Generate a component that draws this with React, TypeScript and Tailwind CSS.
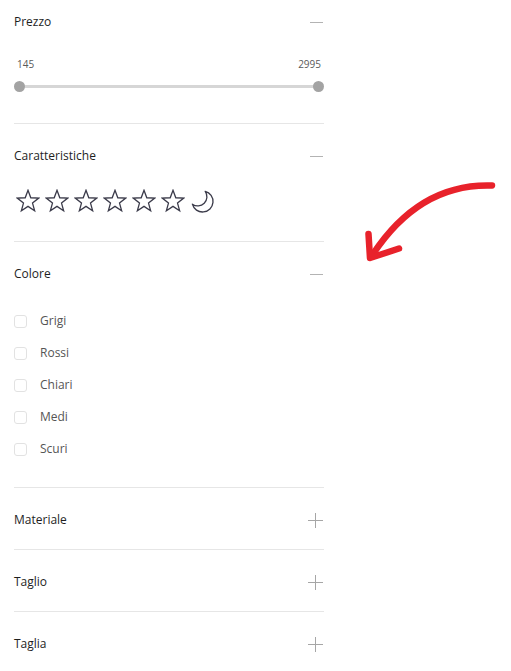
import React from "react";

const font = { fontFamily: '"Open Sans", "Noto Sans", sans-serif' };

function Minus() {
  return <div className="w-[13px] h-px bg-[#b3b3b3] mr-px" />;
}

function Plus() {
  return (
    <svg width="15" height="15" viewBox="0 0 15 15" className="mr-px">
      <line x1="0" y1="7.5" x2="15" y2="7.5" stroke="#a6a6a6" strokeWidth="1" />
      <line x1="7.5" y1="0" x2="7.5" y2="15" stroke="#a6a6a6" strokeWidth="1" />
    </svg>
  );
}

function Header({ title, open }: { title: string; open: boolean }) {
  return (
    <div className="flex items-center justify-between h-[18px]">
      <span className="text-[12px] leading-[18px] text-[#1e1e1e]">{title}</span>
      {open ? <Minus /> : <Plus />}
    </div>
  );
}

function Divider() {
  return <div className="h-px bg-[#e6e6e6]" />;
}

function Star() {
  return (
    <svg width="24" height="24" viewBox="0 0 24 24">
      <polygon
        points="12,1.3 14.79,8.76 22.75,9.11 16.52,14.07 18.64,21.74 12,17.35 5.36,21.74 7.48,14.07 1.25,9.11 9.21,8.76"
        fill="none"
        stroke="#3b3b4a"
        strokeWidth="1.3"
        strokeLinejoin="miter"
      />
    </svg>
  );
}

function Moon() {
  return (
    <svg width="24" height="24" viewBox="0 0 24 24">
      <path
        d="M15.2 2.36 A10.5 10.5 0 1 1 2.36 15.2 A9.2 9.2 0 0 0 15.2 2.36 Z"
        fill="none"
        stroke="#3b3b4a"
        strokeWidth="1.3"
        strokeLinejoin="round"
      />
    </svg>
  );
}

function Check({ label }: { label: string }) {
  return (
    <div className="flex items-center h-[32px]">
      <div className="w-[13px] h-[13px] border border-[#e2e2e2] rounded-[3px] bg-white" />
      <span className="ml-[13px] text-[12px] text-[#555555] leading-[18px]">{label}</span>
    </div>
  );
}

export default function App() {
  return (
    <div className="relative w-[511px] h-[671px] bg-white overflow-hidden" style={font}>
      <div className="ml-[14px] w-[310px]">
        {/* Prezzo */}
        <div className="pt-[13px] pb-[31px]">
          <Header title="Prezzo" open />
          <div className="mt-[26px] flex justify-between px-[3px] text-[10px] leading-[14px] text-[#5a5a5a]">
            <span>145</span>
            <span>2995</span>
          </div>
          <div className="relative mt-[10px] h-[11px]">
            <div className="absolute left-[5px] right-[6px] top-[4px] h-[3px] bg-[#d6d6d6]" />
            <div className="absolute left-0 top-0 w-[11px] h-[11px] rounded-full bg-[#a3a3a3]" />
            <div className="absolute right-0 top-0 w-[11px] h-[11px] rounded-full bg-[#a3a3a3]" />
          </div>
        </div>
        <Divider />
        {/* Caratteristiche */}
        <div className="pt-[23px] pb-[28px]">
          <Header title="Caratteristiche" open />
          <div className="mt-[24px] flex items-center gap-[5px] pl-[2px] h-[24px]">
            <Star />
            <Star />
            <Star />
            <Star />
            <Star />
            <Star />
            <Moon />
          </div>
        </div>
        <Divider />
        {/* Colore */}
        <div className="pt-[23px] pb-[22px]">
          <Header title="Colore" open />
          <div className="mt-[22px] flex flex-col">
            <Check label="Grigi" />
            <Check label="Rossi" />
            <Check label="Chiari" />
            <Check label="Medi" />
            <Check label="Scuri" />
          </div>
        </div>
        <Divider />
        <div className="pt-[23px] pb-[20px]">
          <Header title="Materiale" open={false} />
        </div>
        <Divider />
        <div className="pt-[23px] pb-[20px]">
          <Header title="Taglio" open={false} />
        </div>
        <Divider />
        <div className="pt-[23px] pb-[20px]">
          <Header title="Taglia" open={false} />
        </div>
      </div>
      <svg
        className="absolute left-0 top-0 pointer-events-none"
        width="511"
        height="671"
        viewBox="0 0 511 671"
      >
        <path
          d="M492 185.5 Q420 183 373 254"
          fill="none"
          stroke="#e8222b"
          strokeWidth="6.5"
          strokeLinecap="round"
        />
        <path
          d="M368.5 234 L370 258 L399 248.5"
          fill="none"
          stroke="#e8222b"
          strokeWidth="6.5"
          strokeLinecap="round"
          strokeLinejoin="round"
        />
      </svg>
    </div>
  );
}
